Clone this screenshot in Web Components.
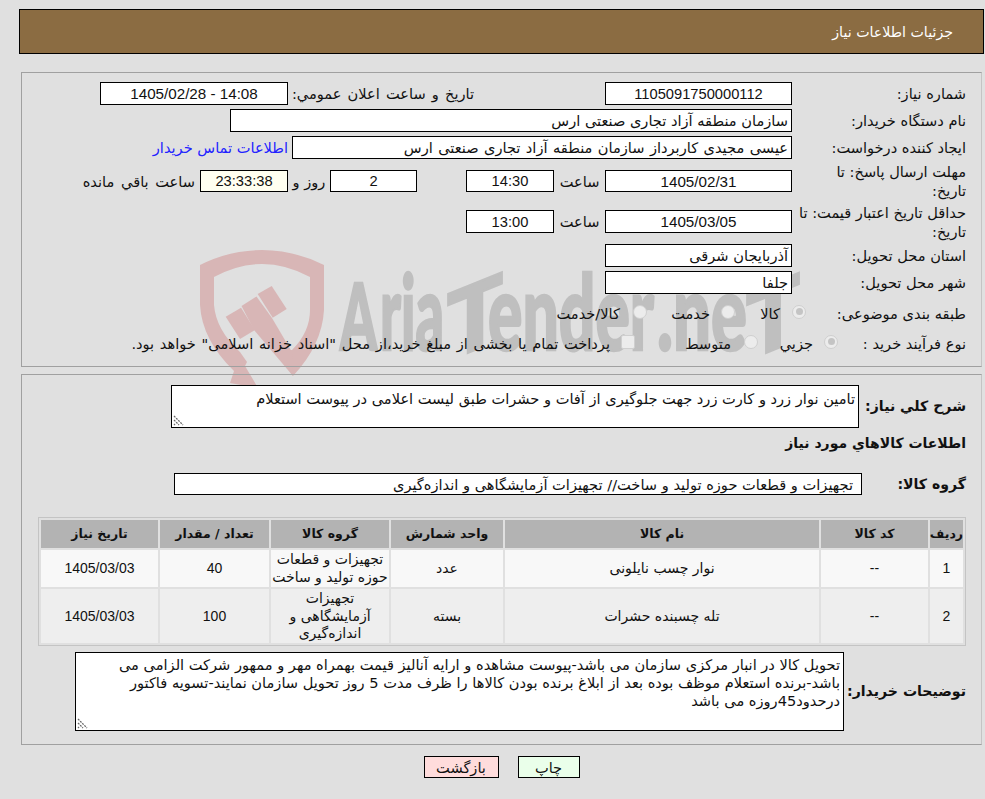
<!DOCTYPE html>
<html lang="fa">
<head>
<meta charset="utf-8">
<title>جزئیات اطلاعات نیاز</title>
<style>
  html, body { margin: 0; padding: 0; background: #e0e0e0; }
  body {
    font-family: "DejaVu Sans", "Noto Sans", sans-serif;
    font-size: 14.6px;
    color: #111;
    overflow: hidden;
  }
</style>
</head>
<body>
<need-page></need-page>

<script>
const LATIN = '"Liberation Sans", "DejaVu Sans", sans-serif';

class WatermarkLogo extends HTMLElement {
  constructor() {
    super();
    this.attachShadow({ mode: 'open' });
    this.shadowRoot.innerHTML = `
      <style>
        :host { display: block; position: absolute; left: 0; top: 0; width: 985px; height: 799px; z-index: 0; }
        svg { display: block; }
        text { font-family: Lato, "Open Sans", sans-serif; font-weight: 900; fill: #bfbfbf; stroke: #bfbfbf; stroke-width: 2.5px; font-size: 92px; }
        text.low { font-size: 105px; }
      </style>
      <svg width="985" height="799" viewBox="0 0 985 799">
        <g fill="#d8b6b6">
          <path d="M200 265 Q230 250 262 250 Q294 250 324 265 L324 310 Q322 345 293 376 L276 352 L292 350 Q310 332 310 310 L310 277 Q286 264 262 264 Q238 264 214 277 L214 305 Q216 330 240 352 L247 362 L245 366 L258 388 L230 383 L234 371 Q202 340 200 305 Z"/>
          <path d="M225.7 316.7 L241 307.7 L255 330 L240 339 Z"/>
          <path d="M241.5 306 L256.5 296.5 L272 318 L292 352 L293 376 L254 330 Z"/>
          <path d="M257.7 294 L271.7 286 L286.7 309 L272.7 317.7 Z"/>
        </g>
        <text x="340" y="350" textLength="37" lengthAdjust="spacingAndGlyphs">A</text>
        <text class="low" x="380" y="350" textLength="64" lengthAdjust="spacingAndGlyphs">ria</text>
        <text transform="translate(475 350) skewY(-22)" x="-28" y="0" textLength="56" lengthAdjust="spacingAndGlyphs">T</text>
        <text class="low" x="488" y="350" textLength="166" lengthAdjust="spacingAndGlyphs">ender</text>
        <text class="low" x="657" y="350" textLength="90" lengthAdjust="spacingAndGlyphs">.ne</text>
        <text transform="translate(773 350) skewY(-22)" x="-27" y="0" textLength="54" lengthAdjust="spacingAndGlyphs">T</text>
      </svg>`;
  }
}
customElements.define('watermark-logo', WatermarkLogo);

class PageHeader extends HTMLElement {
  constructor() {
    super();
    this.attachShadow({ mode: 'open' });
    this.shadowRoot.innerHTML = `
      <style>
        :host {
          display: flex; align-items: center; box-sizing: border-box;
          height: 45px; padding: 0 30px 0 0;
          background: #8b6c42; border: 1px solid #000; color: #fff;
          direction: rtl; font-size: 14.2px; position: relative; z-index: 1;
        }
      </style>
      <slot></slot>`;
  }
}
customElements.define('page-header', PageHeader);

class FormSection extends HTMLElement {
  constructor() {
    super();
    this.attachShadow({ mode: 'open' });
    this.shadowRoot.innerHTML = `
      <style>
        :host {
          display: block; box-sizing: border-box; direction: rtl;
          margin: 0 2px 0 0; padding: 9px 15px 8px 0;
          border: 1px solid #a0a0a0; border-color: #a0a0a0 #c4c4c4 #a0a0a0 #a0a0a0;
          position: relative; z-index: 1;
        }
      </style>
      <slot></slot>`;
  }
}
customElements.define('form-section', FormSection);

class FormRow extends HTMLElement {
  constructor() {
    super();
    this.attachShadow({ mode: 'open' });
    const label = this.getAttribute('label') || '';
    const w = this.getAttribute('label-width') || 174;
    const bold = this.hasAttribute('bold');
    this.shadowRoot.innerHTML = `
      <style>
        :host { display: flex; align-items: center; direction: rtl; margin-top: 4px; }
        :host(.first) { margin-top: 0; }
        .label { flex: none; width: ${w}px; line-height: 19px; white-space: nowrap; font-weight: ${bold ? 700 : 400}; ${bold ? 'font-size: 14.1px;' : ''} }
      </style>
      <div class="label">${label}</div>
      <slot></slot>`;
  }
}
customElements.define('form-row', FormRow);

class FieldBox extends HTMLElement {
  constructor() {
    super();
    this.attachShadow({ mode: 'open' });
    const w = this.getAttribute('w');
    const h = this.getAttribute('h') || 23;
    const latin = this.hasAttribute('latin');
    const bg = this.getAttribute('bg') || '#fff';
    this.shadowRoot.innerHTML = `
      <style>
        :host {
          display: flex; align-items: center; flex: none; box-sizing: border-box;
          width: ${w}px; height: ${h}px; padding: 0 3px;
          background: ${bg}; border: 1px solid #000;
          white-space: nowrap; overflow: hidden;
          ${latin ? `font-family: ${LATIN}; font-size: 14.7px; justify-content: center; direction: ltr;` : ''}
        }
      </style>
      <slot></slot>`;
  }
}
customElements.define('field-box', FieldBox);

class NoteBox extends HTMLElement {
  constructor() {
    super();
    this.attachShadow({ mode: 'open' });
    const w = this.getAttribute('w');
    const h = this.getAttribute('h');
    this.shadowRoot.innerHTML = `
      <style>
        :host {
          display: block; flex: none; box-sizing: border-box;
          width: ${w}px; height: ${h}px; padding: 3px 3px 0;
          background: #fff; border: 1px solid #000; line-height: 18.3px;
          white-space: nowrap; overflow: hidden; position: relative;
        }
        svg { position: absolute; left: 1px; bottom: 1px; }
      </style>
      <slot></slot>
      <svg width="11" height="11" viewBox="0 0 11 11" fill="none" stroke="#6a6a6a" stroke-width="1.3" stroke-dasharray="2 1">
        <path d="M1 1 L10 10 M1 5 L6 10 M1 9 L2 10"/>
      </svg>`;
  }
}
customElements.define('note-box', NoteBox);

class RadioMark extends HTMLElement {
  constructor() {
    super();
    this.attachShadow({ mode: 'open' });
    const checked = this.hasAttribute('checked');
    const square = this.hasAttribute('square');
    this.shadowRoot.innerHTML = `
      <style>
        :host {
          display: flex; align-items: center; justify-content: center; flex: none;
          box-sizing: border-box; width: 14px; height: 14px; margin-bottom: 3px;
          border: 1px solid #cfcfcf; background: #ececec;
          border-radius: ${square ? '2px' : '50%'};
        }
        i { width: 7px; height: 7px; border-radius: 50%; background: #c4c4c4; display: ${checked ? 'block' : 'none'}; }
      </style>
      <i></i>`;
  }
}
customElements.define('radio-mark', RadioMark);

class ItemsTable extends HTMLElement {
  constructor() {
    super();
    this.attachShadow({ mode: 'open' });
    const rows = [
      ['1', '--', 'نوار چسب نایلونی', 'عدد', 'تجهیزات و قطعات<br>حوزه تولید و ساخت', '40', '1405/03/03'],
      ['2', '--', 'تله چسبنده حشرات', 'بسته', 'تجهیزات<br>آزمایشگاهی و<br>اندازه‌گیری', '100', '1405/03/03'],
    ];
    const heads = ['رديف', 'کد کالا', 'نام کالا', 'واحد شمارش', 'گروه کالا', 'تعداد / مقدار', 'تاريخ نياز'];
    const widths = [33, 107, 314, 112, 118, 109, 117];
    const latin = [0, 1, 5, 6];
    this.shadowRoot.innerHTML = `
      <style>
        :host { display: block; margin: 22px 0 0 0; }
        table {
          border-collapse: separate; border-spacing: 2px; table-layout: fixed;
          width: 928px; box-sizing: border-box; border: 1px solid #c4c4c4; direction: rtl;
        }
        th, td { padding: 0; text-align: center; line-height: 17.6px; font-size: 14px; }
        th { background: #b3b3b3; height: 28px; font-size: 12.5px; }
        td { padding-top: 1px; }
        tr.r1 td { background: #f8f8f8; height: 36px; }
        tr.r2 td { background: #eeeeee; height: 52px; }
        td.latin { font-family: ${LATIN}; font-size: 14px; }
      </style>
      <table>
        <colgroup>${widths.map(w => `<col style="width:${w}px">`).join('')}</colgroup>
        <thead><tr>${heads.map(h => `<th>${h}</th>`).join('')}</tr></thead>
        <tbody>
          ${rows.map((r, i) => `<tr class="r${i + 1}">${r.map((c, j) =>
            `<td class="${latin.includes(j) ? 'latin' : ''}">${c}</td>`).join('')}</tr>`).join('')}
        </tbody>
      </table>`;
  }
}
customElements.define('items-table', ItemsTable);

class ActionButton extends HTMLElement {
  constructor() {
    super();
    this.attachShadow({ mode: 'open' });
    const w = this.getAttribute('w');
    const bg = this.getAttribute('bg');
    this.shadowRoot.innerHTML = `
      <style>
        :host {
          display: flex; align-items: center; justify-content: center; box-sizing: border-box;
          width: ${w}px; height: 22px; background: ${bg}; border: 1px solid #000; cursor: pointer;
        }
      </style>
      <slot></slot>`;
  }
}
customElements.define('action-button', ActionButton);

class NeedPage extends HTMLElement {
  constructor() {
    super();
    this.attachShadow({ mode: 'open' });
    this.shadowRoot.innerHTML = `
      <style>
        :host { display: block; box-sizing: border-box; width: 985px; height: 799px; padding: 9px 1px 0 19px; position: relative; }
        .sec1 { margin-top: 18px; margin-left: 2px; }
        .sec2 { margin-top: 7px; margin-left: 2px; padding-top: 10px; height: 371px; }
        .t { flex: none; white-space: nowrap; }
        a { color: #2222ff; text-decoration: none; flex: none; margin-right: 4px; }
        .opt { display: flex; align-items: center; flex: none; white-space: nowrap; }
        .c { flex: none; text-align: center; }
        .heading { font-weight: 700; height: 30px; display: flex; align-items: center; font-size: 14px; }
        .actions { display: flex; justify-content: center; gap: 19px; direction: rtl; margin-top: 11px; position: relative; z-index: 1; }
      </style>
      <watermark-logo></watermark-logo>
      <page-header>جزئیات اطلاعات نیاز</page-header>

      <form-section class="sec1">
        <form-row class="first" label="شماره نياز:">
          <field-box w="187" latin>1105091750000112</field-box>
          <span class="t" style="margin-right:131px;width:186px;word-spacing:1.5px">تاریخ و ساعت اعلان عمومي:</span>
          <field-box w="188" latin style="font-size:15.2px">1405/02/28 - 14:08</field-box>
        </form-row>
        <form-row label="نام دستگاه خریدار:">
          <field-box w="562">سازمان منطقه آزاد تجاری صنعتی ارس</field-box>
        </form-row>
        <form-row label="ایجاد کننده درخواست:">
          <field-box w="500" style="word-spacing:.8px">عیسی مجیدی کاربرداز سازمان منطقه آزاد تجاری صنعتی ارس</field-box>
          <a href="#">اطلاعات تماس خریدار</a>
        </form-row>
        <form-row label="مهلت ارسال پاسخ: تا<br>تاریخ:" style="height:36px">
          <field-box w="187" h="22" latin style="font-size:15.2px">1405/02/31</field-box>
          <span class="c" style="width:51px">ساعت</span>
          <field-box w="88" h="22" latin>14:30</field-box>
          <span style="width:49px;flex:none"></span>
          <field-box w="87" h="22" latin>2</field-box>
          <span class="c" style="width:42px">روز و</span>
          <field-box w="88" h="22" latin bg="#fffff0">23:33:38</field-box>
          <span class="t" style="margin-right:5px;word-spacing:2px">ساعت باقي مانده</span>
        </form-row>
        <form-row label="حداقل تاريخ اعتبار قيمت: تا<br>تاریخ:" style="height:37px">
          <field-box w="187" latin style="font-size:15.2px">1405/03/05</field-box>
          <span class="c" style="width:51px">ساعت</span>
          <field-box w="88" latin>13:00</field-box>
        </form-row>
        <form-row label="استان محل تحویل:">
          <field-box w="187">آذربایجان شرقی</field-box>
        </form-row>
        <form-row label="شهر محل تحویل:">
          <field-box w="187">جلفا</field-box>
        </form-row>
        <form-row label="طبقه بندی موضوعی:" label-width="160" style="height:30px">
          <span class="opt" style="width:71px"><radio-mark checked></radio-mark><span style="margin-right:12px">کالا</span></span>
          <span class="opt" style="width:88px"><radio-mark></radio-mark><span style="margin-right:11px">خدمت</span></span>
          <span class="opt"><radio-mark></radio-mark><span style="margin-right:13px">کالا/خدمت</span></span>
        </form-row>
        <form-row label="نوع فرآیند خرید :" label-width="128" style="height:30px;margin-top:0">
          <span class="opt" style="width:80px"><radio-mark checked></radio-mark><span style="margin-right:11px">جزيي</span></span>
          <span class="opt" style="width:123px"><radio-mark></radio-mark><span style="margin-right:13px">متوسط</span></span>
          <span class="opt"><radio-mark square></radio-mark><span style="margin-right:11px;word-spacing:1.1px">پرداخت تمام یا بخشی از مبلغ خرید،از محل "اسناد خزانه اسلامی" خواهد بود.</span></span>
        </form-row>
      </form-section>

      <form-section class="sec2">
        <form-row class="first" label="شرح کلي نياز:" label-width="107" bold>
          <note-box w="688" h="43" style="padding-top:4px">تامین نوار زرد و کارت زرد جهت جلوگیری از آفات و حشرات طبق لیست اعلامی در پیوست استعلام</note-box>
        </form-row>
        <div class="heading">اطلاعات کالاهاي مورد نياز</div>
        <form-row label="گروه کالا:" label-width="104" bold style="margin-top:15px">
          <field-box w="688" h="22" style="padding-right:8px">تجهیزات و قطعات حوزه تولید و ساخت// تجهیزات آزمایشگاهی و اندازه‌گیری</field-box>
        </form-row>
        <items-table></items-table>
        <form-row label="توضیحات خریدار:" label-width="122" bold style="margin-top:6px">
          <note-box w="769" h="79">تحویل کالا در انبار مرکزی سازمان می باشد-پیوست مشاهده و ارایه آنالیز قیمت بهمراه مهر و ممهور شرکت الزامی می<br>باشد-برنده استعلام موظف بوده بعد از ابلاغ برنده بودن کالاها را ظرف مدت 5 روز تحویل سازمان نمایند-تسویه فاکتور<br>درحدود45روزه می باشد</note-box>
        </form-row>
      </form-section>

      <div class="actions">
        <action-button w="62" bg="#eaffea">چاپ</action-button>
        <action-button w="75" bg="#ffdcdc">بازگشت</action-button>
      </div>`;
  }
}
customElements.define('need-page', NeedPage);
</script>
</body>
</html>
